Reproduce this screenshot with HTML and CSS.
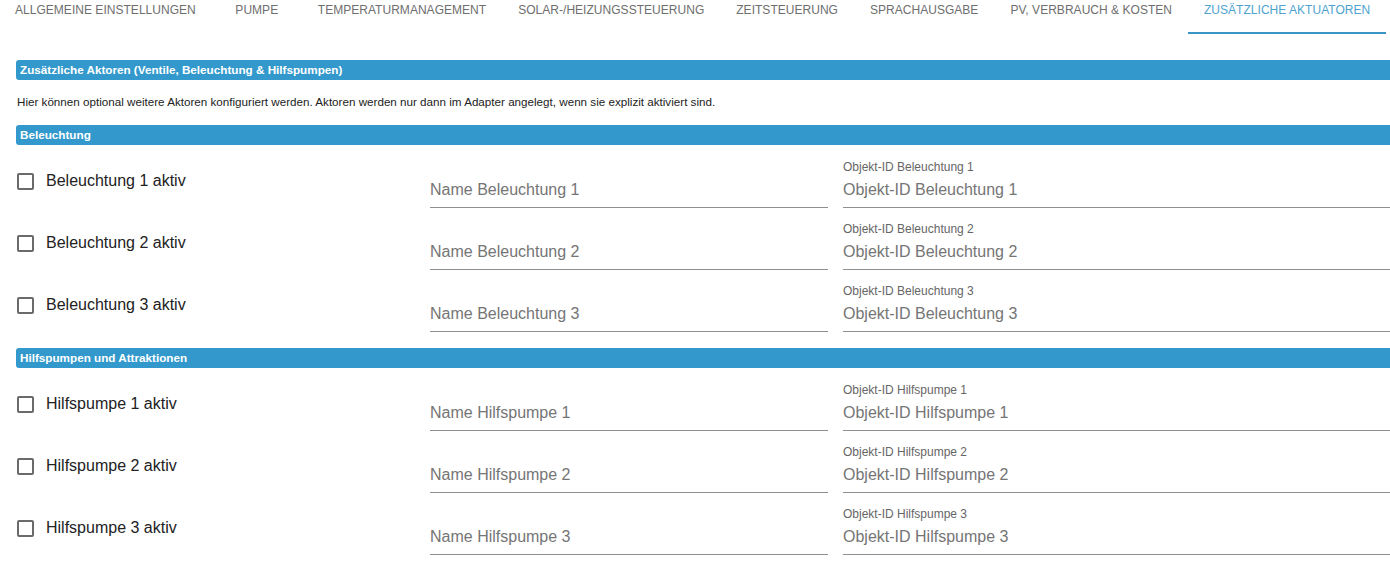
FILE: index.html
```html
<!DOCTYPE html>
<html lang="de">
<head>
<meta charset="utf-8">
<title>Zusätzliche Aktuatoren</title>
<link rel="stylesheet" href="styles.css">
</head>
<body>
<nav class="tabs">
  <div class="tab">Allgemeine Einstellungen</div>
  <div class="tab">Pumpe</div>
  <div class="tab">Temperaturmanagement</div>
  <div class="tab">Solar-/Heizungssteuerung</div>
  <div class="tab">Zeitsteuerung</div>
  <div class="tab">Sprachausgabe</div>
  <div class="tab">PV, Verbrauch &amp; Kosten</div>
  <div class="tab tab-active">Zusätzliche Aktuatoren</div>
</nav>

<main class="panel">
  <div class="section-bar section-bar-first">Zusätzliche Aktoren (Ventile, Beleuchtung &amp; Hilfspumpen)</div>
  <p class="intro">Hier können optional weitere Aktoren konfiguriert werden. Aktoren werden nur dann im Adapter angelegt, wenn sie explizit aktiviert sind.</p>

  <div class="section-bar">Beleuchtung</div>
  <div class="group">
    <div class="row">
      <label class="check"><span class="box"></span><span class="check-text">Beleuchtung 1 aktiv</span></label>
      <div class="field field-name"><span class="field-value">Name Beleuchtung 1</span></div>
      <div class="field field-id"><span class="field-label">Objekt-ID Beleuchtung 1</span><span class="field-value">Objekt-ID Beleuchtung 1</span></div>
    </div>
    <div class="row">
      <label class="check"><span class="box"></span><span class="check-text">Beleuchtung 2 aktiv</span></label>
      <div class="field field-name"><span class="field-value">Name Beleuchtung 2</span></div>
      <div class="field field-id"><span class="field-label">Objekt-ID Beleuchtung 2</span><span class="field-value">Objekt-ID Beleuchtung 2</span></div>
    </div>
    <div class="row">
      <label class="check"><span class="box"></span><span class="check-text">Beleuchtung 3 aktiv</span></label>
      <div class="field field-name"><span class="field-value">Name Beleuchtung 3</span></div>
      <div class="field field-id"><span class="field-label">Objekt-ID Beleuchtung 3</span><span class="field-value">Objekt-ID Beleuchtung 3</span></div>
    </div>
  </div>

  <div class="section-bar section-bar-gap">Hilfspumpen und Attraktionen</div>
  <div class="group">
    <div class="row">
      <label class="check"><span class="box"></span><span class="check-text">Hilfspumpe 1 aktiv</span></label>
      <div class="field field-name"><span class="field-value">Name Hilfspumpe 1</span></div>
      <div class="field field-id"><span class="field-label">Objekt-ID Hilfspumpe 1</span><span class="field-value">Objekt-ID Hilfspumpe 1</span></div>
    </div>
    <div class="row">
      <label class="check"><span class="box"></span><span class="check-text">Hilfspumpe 2 aktiv</span></label>
      <div class="field field-name"><span class="field-value">Name Hilfspumpe 2</span></div>
      <div class="field field-id"><span class="field-label">Objekt-ID Hilfspumpe 2</span><span class="field-value">Objekt-ID Hilfspumpe 2</span></div>
    </div>
    <div class="row">
      <label class="check"><span class="box"></span><span class="check-text">Hilfspumpe 3 aktiv</span></label>
      <div class="field field-name"><span class="field-value">Name Hilfspumpe 3</span></div>
      <div class="field field-id"><span class="field-label">Objekt-ID Hilfspumpe 3</span><span class="field-value">Objekt-ID Hilfspumpe 3</span></div>
    </div>
  </div>
</main>
</body>
</html>
```

FILE: styles.css
```css
html, body {
  margin: 0;
  padding: 0;
  background: #ffffff;
  overflow: hidden;
}

body {
  font-family: "Liberation Sans", Arial, sans-serif;
  color: #222222;
}

/* tab strip */
.tabs {
  display: flex;
  height: 34px;
  margin-left: -1px;
}

.tab {
  box-sizing: border-box;
  min-width: 90px;
  padding: 3px 16px 0;
  height: 34px;
  font-size: 12px;
  line-height: 15px;
  letter-spacing: 0.03px;
  text-transform: uppercase;
  text-align: center;
  color: #6e6e6e;
  white-space: nowrap;
  border-bottom: 2px solid transparent;
}

.tab-active {
  color: #4ea3cf;
  border-bottom-color: #3a95c4;
}

/* settings panel */
.panel {
  margin-left: 16px;
  margin-right: -8px;
}

.section-bar {
  height: 20px;
  line-height: 20px;
  padding-left: 4px;
  background: #3399cc;
  color: #ffffff;
  font-size: 11.7px;
  font-weight: bold;
  border-radius: 3px;
}

.section-bar-first {
  margin-top: 26px;
}

.section-bar-gap {
  margin-top: 16px;
}

.intro {
  margin: 15px 0 16px 1px;
  font-size: 11.65px;
  line-height: 14px;
  color: #222222;
}

.group {
  padding-top: 1px;
}

.row {
  display: grid;
  grid-template-columns: 414px 413px 1fr;
  height: 62px;
  align-items: end;
}

.check {
  align-self: start;
  display: flex;
  align-items: center;
  padding-top: 25px;
  height: 20px;
}

.box {
  box-sizing: border-box;
  width: 17px;
  height: 17px;
  margin-left: 1px;
  border: 2px solid #6a6a6a;
  border-radius: 2px;
}

.check-text {
  margin-left: 12px;
  font-size: 16px;
  line-height: 20px;
  color: #222222;
}

.field {
  display: flex;
  flex-direction: column;
  padding-bottom: 7px;
  border-bottom: 1px solid #8f8f8f;
}

.field-name {
  margin-right: 15px;
}

.field-label {
  font-size: 12px;
  line-height: 14px;
  color: #666666;
  margin-bottom: 6px;
}

.field-value {
  font-size: 16px;
  line-height: 20px;
  color: #757575;
}
```
